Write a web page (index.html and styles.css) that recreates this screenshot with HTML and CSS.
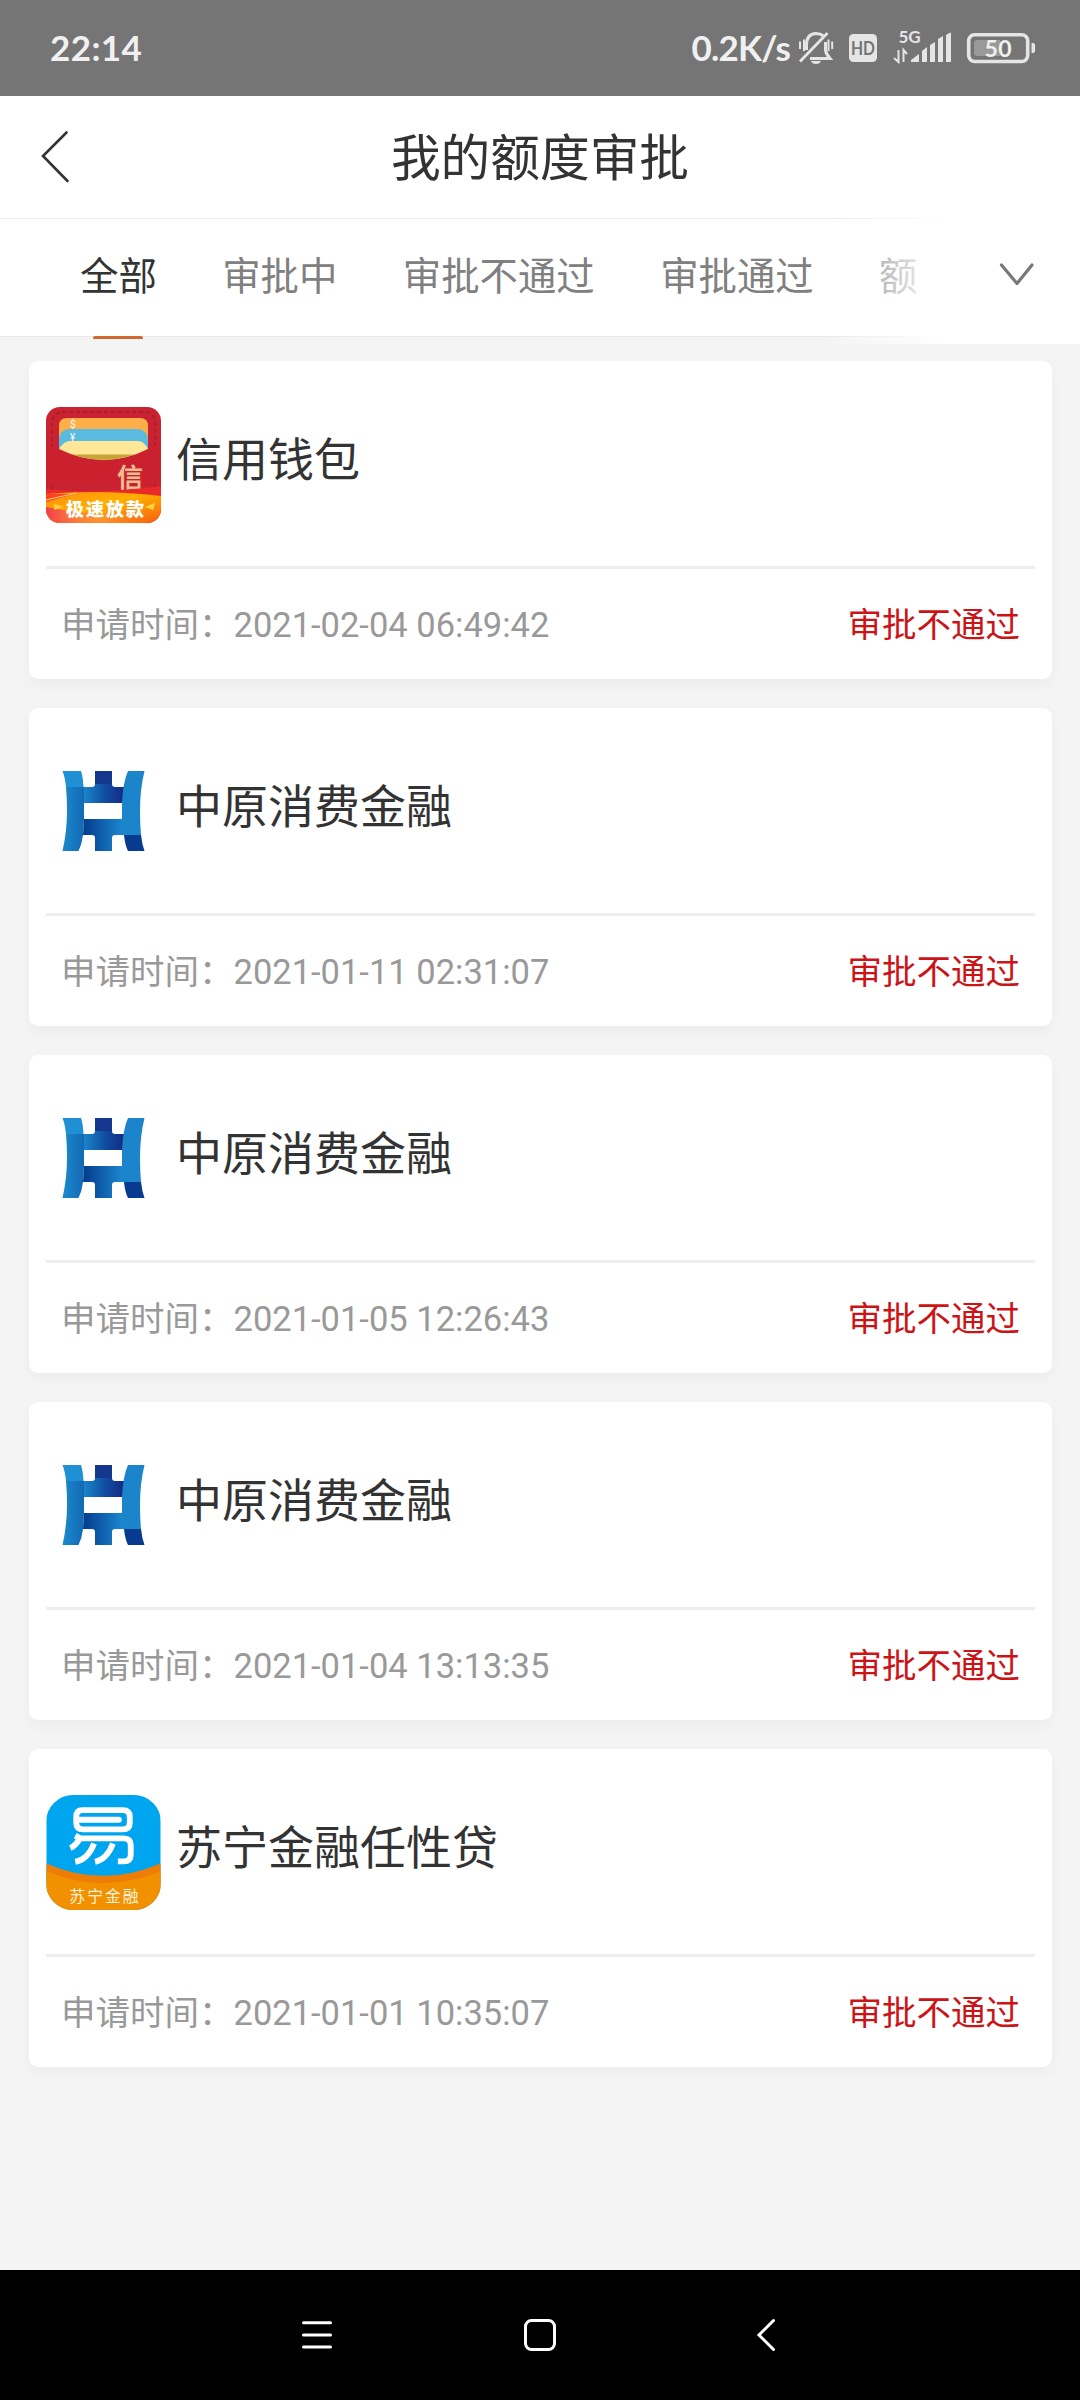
FILE: index.html
```html
<!DOCTYPE html>
<html lang="zh-CN">
<head>
<meta charset="utf-8">
<title>我的额度审批</title>
<link rel="stylesheet" href="styles.css">
</head>
<body>
<svg class="defs" width="0" height="0" aria-hidden="true">
  <defs>
    <linearGradient id="zyTop" x1="0" x2="1"><stop offset="0" stop-color="#1b85c9"/><stop offset=".55" stop-color="#0f4ba0"/><stop offset="1" stop-color="#152a84"/></linearGradient>
    <linearGradient id="zyBottom" x1="0" x2="1"><stop offset="0" stop-color="#043b8d"/><stop offset="1" stop-color="#1b88cf"/></linearGradient>
    <linearGradient id="zyLeft" x1="0" x2="1"><stop offset="0" stop-color="#1c8acd"/><stop offset="1" stop-color="#0d58a8"/></linearGradient>
    <linearGradient id="band" x1="0" y1="0" x2="1" y2="1"><stop offset="0" stop-color="#ff8a12"/><stop offset=".45" stop-color="#ffb000"/><stop offset="1" stop-color="#f9600f"/></linearGradient>
    <linearGradient id="bandGlow" x1="0" x2="1"><stop offset="0" stop-color="#f33c4c"/><stop offset=".5" stop-color="#ff9a50" stop-opacity=".5"/><stop offset="1" stop-color="#fb6010" stop-opacity="0"/></linearGradient>
    <symbol id="zhongyuan" viewBox="0 -3 115 116">
      <path d="M16.500 14H35Q37 20 37.500 30H20Q19 20 16.500 14Z" fill="#1f90d4"/>
      <path d="M20 30H49L40 46H38V62L37 78Q36 87 32.500 94H16.500Q21 74 21 54Q21 41 20 30Z" fill="url(#zyLeft)"/>
      <path d="M49 14H66V27Q66 30 69 30H78V46H38V30H46Q49 30 49 27Z" fill="url(#zyTop)"/>
      <path d="M49 14H66V27H49Z" fill="#14368d"/>
      <path d="M82 14H98.500Q94 32 94 54Q94 67 95 78H76V46Q77 25 82 14Z" fill="#1b84cb"/>
      <path d="M38 62H77V78H69Q66 78 66 81V94H49V81Q49 78 46 78H37Z" fill="url(#zyBottom)"/>
      <path d="M78 78H95Q96 87 98.500 94H82Q79 88 78 78Z" fill="#083a90"/>
    </symbol>
  </defs>
</svg>

<div class="screen">
  <header class="status">
    <span class="clock">22:14</span>
    <div class="status-right">
      <span class="speed">0.2K/s</span>
      <svg class="status-icons" width="244" height="40" viewBox="796 28 244 40">
        <g fill="none" stroke="#e5e5e5" stroke-width="3">
          <path d="M806.500 50V45Q806.500 34 816 33.500Q820.500 33.500 823.500 36"/>
          <path d="M825.500 42V50Q826 54 830 58.500H810"/>
          <path d="M800 61.500L827.500 33" stroke-width="2.800"/>
          <path d="M800 41.500V49M804 39.500V51M828.500 39.500V51M832.200 41.500V49" stroke-width="2"/>
        </g>
        <path d="M811 61H821Q820 64 816 64Q812 64 811 61Z" fill="#e5e5e5"/>
        <rect x="849" y="34" width="28" height="28" rx="4.500" fill="#e5e5e5"/>
        <text x="863" y="55" class="hd" text-anchor="middle" textLength="24" lengthAdjust="spacingAndGlyphs">HD</text>
        <text x="898.500" y="43" class="net" textLength="22">5G</text>
        <path d="M898.500 50V62L894 58M903.500 62V50L907 54" fill="none" stroke="#e5e5e5" stroke-width="2"/>
        <path d="M911 62V60L919 54V62ZM922 62V51L927 47V62ZM930 62V45L935 42V62ZM938 62V39L943 36V62ZM946 62V35Q948 33 951 32.500V62Z" fill="#e5e5e5"/>
        <rect x="968.700" y="34.700" width="59" height="26.800" rx="6" fill="none" stroke="#e5e5e5" stroke-width="3.600"/>
        <path d="M977 40H1000V56H977Q974 56 974 53V43Q974 40 977 40Z" fill="#999"/>
        <path d="M1031.500 43H1033Q1035 43 1035 45V51Q1035 53 1033 53H1031.500Z" fill="#e5e5e5"/>
        <text x="998" y="57" class="level" text-anchor="middle" textLength="27">50</text>
      </svg>
    </div>
  </header>

  <div class="titlebar">
    <svg class="back" width="32" height="56" viewBox="0 0 32 56"><path d="M26.500 3.500L3 27L27.500 52" fill="none" stroke="#333" stroke-width="2.600" stroke-linecap="round"/></svg>
    <h1>我的额度审批</h1>
  </div>

  <nav class="tabs">
    <span class="tab active">全部</span>
    <span class="tab">审批中</span>
    <span class="tab">审批不通过</span>
    <span class="tab">审批通过</span>
    <span class="tab">额</span>
    <div class="fade">
      <svg width="40" height="28" viewBox="0 0 40 28"><path d="M4.500 4L20 22.500L35 4" fill="none" stroke="#777" stroke-width="3.200" stroke-linecap="round" stroke-linejoin="round"/></svg>
    </div>
  </nav>

  <main class="list">
    <article class="card">
      <div class="top">
        <svg class="logo rounded" viewBox="0 0 115 116">
          <rect width="115" height="116" fill="#c92331"/>
          <rect x="6" y="5" width="103" height="105" rx="10" fill="none" stroke="#a51a2b" stroke-width="1.400" stroke-dasharray="4 3"/>
          <path d="M0 37Q8 40 14 44Q56 62 101 44Q108 39 115 37V78H0Z" fill="#cb202d"/>
          <path d="M13 41V19Q13 11 21 11H94Q102 11 102 19V41Z" fill="#feae49"/>
          <text x="24" y="21" class="coin">$</text>
          <path d="M13 41V32Q14 22 24 22H92Q101 23 102 32V41Z" fill="#59bbdf"/>
          <text x="24" y="34" class="coin">¥</text>
          <path d="M13 42Q18 34 24 34H92Q98 34 102 42Q58 64 13 42Z" fill="#fee898"/>
          <path d="M26 47.500H89Q58 58 26 47.500Z" fill="#c7a437"/>
          <text x="71" y="80" class="seal">信</text>
          <path d="M0 82Q50 88 115 79V116H0Z" fill="#e92a29"/>
          <path d="M0 87Q55 82 115 89V116H0Z" fill="url(#band)"/>
          <path d="M0 95L28 87L0 87Z" fill="#fa4522"/>
          <path d="M0 100Q60 112 115 105V116H0Z" fill="url(#bandGlow)"/>
          <path d="M0 93L30 86" stroke="#ffd578" stroke-width="1"/>
          <path d="M9 98L15 100L9 102ZM108 97L101 100L107 102Z" fill="#ffd33c" stroke="#ffd33c" stroke-width="1.500"/>
          <text x="20" y="108.500" class="slogan" textLength="78">极速放款</text>
        </svg>
        <h2>信用钱包</h2>
      </div>
      <div class="bottom"><span class="time">申请时间：2021-02-04 06:49:42</span><span class="result">审批不通过</span></div>
    </article>

    <article class="card">
      <div class="top"><svg class="logo"><use href="#zhongyuan"/></svg><h2>中原消费金融</h2></div>
      <div class="bottom"><span class="time">申请时间：2021-01-11 02:31:07</span><span class="result">审批不通过</span></div>
    </article>

    <article class="card">
      <div class="top"><svg class="logo"><use href="#zhongyuan"/></svg><h2>中原消费金融</h2></div>
      <div class="bottom"><span class="time">申请时间：2021-01-05 12:26:43</span><span class="result">审批不通过</span></div>
    </article>

    <article class="card">
      <div class="top"><svg class="logo"><use href="#zhongyuan"/></svg><h2>中原消费金融</h2></div>
      <div class="bottom"><span class="time">申请时间：2021-01-04 13:13:35</span><span class="result">审批不通过</span></div>
    </article>

    <article class="card">
      <div class="top">
        <svg class="logo suning" viewBox="0 0 115 116">
          <rect width="115" height="116" fill="#00a5ef"/>
          <path d="M0 69Q57 94 115 69V116H0Z" fill="#ee7d05"/>
          <path d="M0 77Q57 101 115 77V116H0Z" fill="#f29100"/>
          <g fill="none" stroke="#fff" stroke-width="5.900">
            <path d="M36 15.300H77Q84 15.300 84 22V28Q84 34.700 77 34.700H37Q30 34.700 30 28V22Q30 15.300 36 15.300Z"/>
            <path d="M31 25H73" stroke-linecap="round"/>
            <path d="M29 41L34 43.800H78Q85 43.800 85 51V60Q85 67 78 67H72"/>
            <path d="M34 43Q30 51 24 53.500M48 49Q42 65 29 67.500M67 49Q61 65 49 67.500"/>
          </g>
          <text x="23" y="108" class="brand" textLength="70">苏宁金融</text>
        </svg>
        <h2>苏宁金融任性贷</h2>
      </div>
      <div class="bottom"><span class="time">申请时间：2021-01-01 10:35:07</span><span class="result">审批不通过</span></div>
    </article>
  </main>

  <footer class="navbar">
    <svg width="34" height="36" viewBox="0 0 34 36"><path d="M3.500 5.700H30.500M3.500 18H30.500M3.500 30H30.500" stroke="#fff" stroke-width="3" stroke-linecap="round"/></svg>
    <svg width="36" height="36" viewBox="0 0 36 36"><rect x="3.500" y="3.500" width="29" height="29" rx="6" fill="none" stroke="#fff" stroke-width="3"/></svg>
    <svg width="24" height="36" viewBox="0 0 24 36"><path d="M19.500 3.500L5 18L19.500 32.500" fill="none" stroke="#fff" stroke-width="3" stroke-linecap="round"/></svg>
  </footer>
</div>
</body>
</html>
```
FILE: styles.css
```css
* {
  box-sizing: border-box;
}

body {
  margin: 0;
  background: #f4f4f4;
  font-family: Roboto, "Noto Sans CJK SC", sans-serif;
  color: #333;
}

.defs {
  position: absolute;
}

.screen {
  display: flex;
  flex-direction: column;
  width: 1080px;
  height: 2400px;
  overflow: hidden;
}

.status {
  flex: none;
  display: flex;
  justify-content: space-between;
  align-items: center;
  height: 96px;
  padding: 0 40px 0 50px;
  background: #757575;
  color: #f0f0f0;
  font: bold 35px/40px Lato, sans-serif;
}

.clock {
  padding-bottom: 2px;
  letter-spacing: 0.4px;
}

.speed {
  padding-bottom: 2px;
  letter-spacing: -0.8px;
}

.status-right {
  display: flex;
  align-items: center;
  gap: 6px;
}

.status-icons {
  overflow: visible;
}

.hd {
  font: bold 19px Lato, sans-serif;
  fill: #757575;
}

.net {
  font: bold 17px Lato, sans-serif;
  fill: #e5e5e5;
}

.level {
  font: bold 23px Lato, sans-serif;
  fill: #f0f0f0;
}

.titlebar {
  flex: none;
  display: grid;
  grid-template-columns: 160px 1fr 160px;
  align-items: center;
  height: 123px;
  background: #fff;
  border-bottom: 1px solid #e8eaeb;
}

.back {
  margin: 0 0 0 40px;
}

h1 {
  margin: 0;
  padding-top: 4px;
  font-size: 49.7px;
  font-weight: 400;
  line-height: 60px;
  text-align: center;
}

.tabs {
  position: relative;
  flex: none;
  display: flex;
  gap: 65.4px;
  height: 118px;
  padding-left: 80px;
  background: #fff;
  border-bottom: 1px solid #e9e9e9;
}

.tab {
  flex: none;
  font-size: 38.4px;
  line-height: 115px;
  color: #808080;
}

.active {
  display: flex;
  flex-direction: column;
  align-items: center;
  color: #333;
}

.active::after {
  content: "";
  flex: none;
  width: 50px;
  height: 2.500px;
  margin-top: 2px;
  border-radius: 2px 2px 0 0;
  background: #d2692f;
}

.fade {
  position: absolute;
  top: -2px;
  right: 0;
  display: flex;
  align-items: center;
  justify-content: flex-end;
  width: 255px;
  height: 127px;
  padding: 0 43px 11px 0;
  background: linear-gradient(90deg, rgba(255, 255, 255, 0), #fff 120px);
}

.list {
  flex: 1;
  display: flex;
  flex-direction: column;
  gap: 29px;
  padding: 24px 28px 0 29px;
}

.card {
  flex: none;
  height: 318px;
  padding: 0 17px;
  border-radius: 9px;
  background: #fff;
  box-shadow: 0 6px 14px rgba(0, 0, 0, 0.035);
}

.top {
  display: flex;
  align-items: flex-start;
  gap: 15px;
  height: 208px;
  padding-top: 46px;
  border-bottom: 3px solid #eee;
}

.logo {
  flex: none;
  width: 115px;
  height: 116px;
}

.rounded {
  border-radius: 14px;
}

.suning {
  height: 115px;
  border-radius: 27px;
}

h2 {
  margin: 19px 0 0;
  font-size: 46px;
  font-weight: 400;
  line-height: 68px;
}

.bottom {
  display: flex;
  justify-content: space-between;
  align-items: center;
  height: 110px;
  padding: 0 15px 4px;
  font-size: 34.5px;
}

.time {
  color: #999;
}

.result {
  color: #cc1417;
}

.coin {
  font: 10px Roboto, sans-serif;
  fill: #fff;
}

.seal {
  font: bold 26px "Noto Sans CJK SC", sans-serif;
  fill: #eebd91;
}

.slogan {
  font: 900 18px "Noto Sans CJK SC", sans-serif;
  fill: #fff;
}

.brand {
  font: 16px "Noto Sans CJK SC", sans-serif;
  fill: #fff2dc;
}

.navbar {
  flex: none;
  display: flex;
  align-items: center;
  gap: 188px;
  height: 130px;
  padding-left: 300px;
  background: #000;
}

.navbar svg + svg + svg {
  margin-left: 8px;
}
```
